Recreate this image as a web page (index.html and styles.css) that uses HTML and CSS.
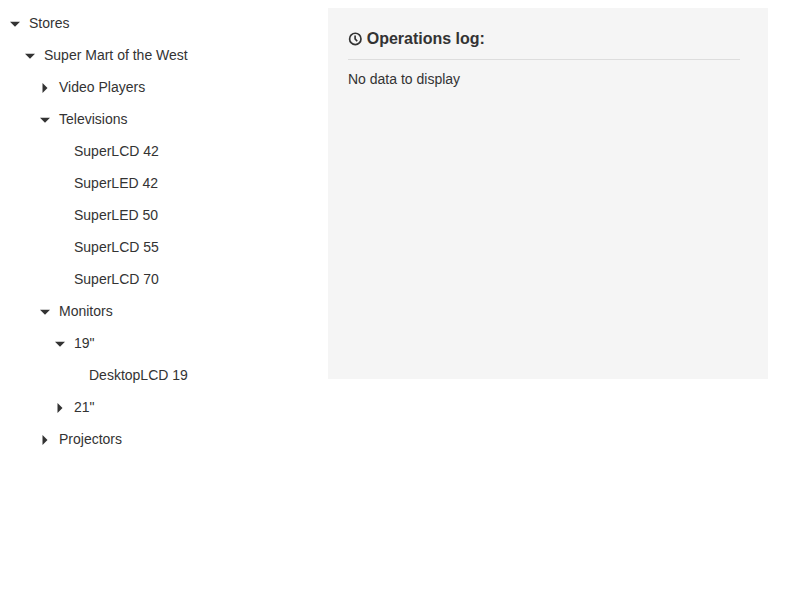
FILE: index.html
```html
<!DOCTYPE html>
<html lang="en">
<head>
<meta charset="utf-8">
<title>Stores</title>
<link rel="stylesheet" href="styles.css">
</head>
<body>
<div class="layout">
<ul class="tree">
<li><div class="item"><svg class="arrow" viewBox="0 0 18 18"><path d="M4 6.7h10l-5 5z"/></svg>Stores</div>
<ul>
<li><div class="item"><svg class="arrow" viewBox="0 0 18 18"><path d="M4 6.7h10l-5 5z"/></svg>Super Mart of the West</div>
<ul>
<li><div class="item"><svg class="arrow" viewBox="0 0 18 18"><path d="M6.5 4v10l5-5z"/></svg>Video Players</div></li>
<li><div class="item"><svg class="arrow" viewBox="0 0 18 18"><path d="M4 6.7h10l-5 5z"/></svg>Televisions</div>
<ul>
<li><div class="item leaf">SuperLCD 42</div></li>
<li><div class="item leaf">SuperLED 42</div></li>
<li><div class="item leaf">SuperLED 50</div></li>
<li><div class="item leaf">SuperLCD 55</div></li>
<li><div class="item leaf">SuperLCD 70</div></li>
</ul></li>
<li><div class="item"><svg class="arrow" viewBox="0 0 18 18"><path d="M4 6.7h10l-5 5z"/></svg>Monitors</div>
<ul>
<li><div class="item"><svg class="arrow" viewBox="0 0 18 18"><path d="M4 6.7h10l-5 5z"/></svg>19"</div>
<ul><li><div class="item leaf">DesktopLCD 19</div></li></ul></li>
<li><div class="item"><svg class="arrow" viewBox="0 0 18 18"><path d="M6.5 4v10l5-5z"/></svg>21"</div></li>
</ul></li>
<li><div class="item"><svg class="arrow" viewBox="0 0 18 18"><path d="M6.5 4v10l5-5z"/></svg>Projectors</div></li>
</ul></li>
</ul></li>
</ul>
<section class="log">
<h1 class="title"><svg class="clock" viewBox="0 0 14 14"><circle cx="7.3" cy="6.9" r="5.7"/><path d="M7.1 3.6V6.9l2.1 2.4"/></svg>Operations log:</h1>
<p class="empty">No data to display</p>
</section>
</div>
</body>
</html>
```

FILE: styles.css
```css
body {
  margin: 8px 0 0;
  font: 14px/18px "Liberation Sans", Arial, sans-serif;
  color: #333;
  background: #fff;
}
.layout { display: flex; align-items: flex-start; }
.tree { width: 328px; }
.tree, .tree ul { list-style: none; margin: 0; padding: 0; }
.tree ul { padding-left: 15px; }
.item {
  display: flex;
  align-items: center;
  box-sizing: border-box;
  height: 32px;
  padding: 0 0 2px 6px;
}
.leaf { padding-left: 29px; }
.arrow {
  width: 18px;
  height: 18px;
  margin: 2px 5px 0 0;
  fill: #333;
}
.log {
  box-sizing: border-box;
  width: 440px;
  height: 371px;
  padding: 20px 28px 0 20px;
  background: #f5f5f5;
}
.title {
  display: flex;
  align-items: center;
  box-sizing: border-box;
  height: 32px;
  margin: 0;
  padding-bottom: 10px;
  border-bottom: 1px solid #ddd;
  font-size: 16px;
}
.clock {
  width: 14px;
  height: 14px;
  margin-right: 4.7px;
  fill: none;
  stroke: #333;
  stroke-width: 1.65;
}
.empty { margin: 10px 0 0; }
```
